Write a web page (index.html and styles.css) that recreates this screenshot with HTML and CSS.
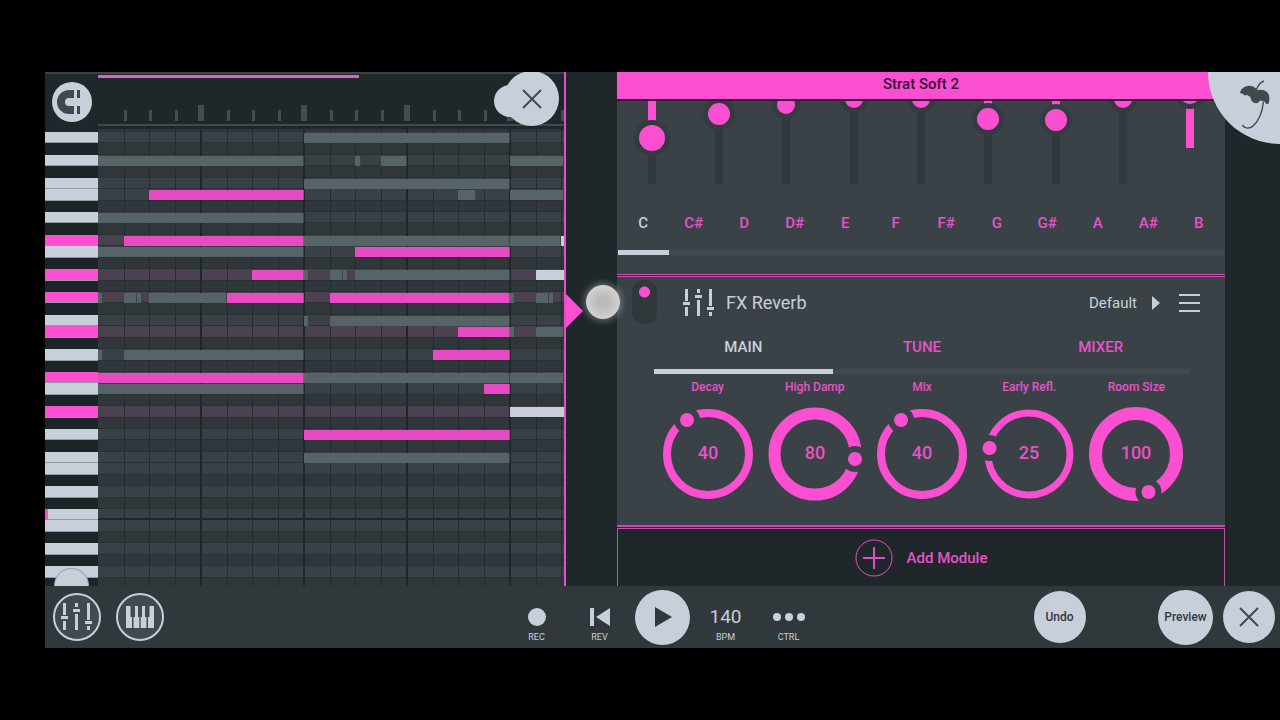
FILE: index.html
```html
<!DOCTYPE html>
<html lang="en">
<head>
  <meta charset="UTF-8" />
  <meta name="viewport" content="width=device-width, initial-scale=1.0" />
  <title>Strat Soft 2</title>
  <link rel="stylesheet" href="styles.css">
</head>
<body>
  <div class="app">
    <main class="workspace">
      <!-- Piano roll -->
      <section class="roll">
        <div class="roll-top">
          <button class="magnet" aria-label="Snap">
            <svg viewBox="0 0 40 40" width="40" height="40">
              <path d="M22 8H17A12 12 0 0 0 17 32H22V24H17A4 4 0 0 1 17 16H22Z" fill="#42484e"/>
              <path d="M25 8h3v8h-3zM25 24h3v8h-3z" fill="#42484e"/>
            </svg>
          </button>
          <div class="ruler">
            <div class="loop"></div>
            <div class="ticks" id="ticks"></div>
          </div>
          <button class="close-roll" aria-label="Close editor">
            <svg viewBox="0 0 20 20" width="20" height="20"><path d="M1 1L19 19M19 1L1 19"/></svg>
          </button>
        </div>
        <div class="roll-body">
          <div class="keys" id="keys"></div>
          <div class="grid" id="grid">
            <div class="lanes" id="lanes"></div>
          </div>
          <div class="handle"></div>
        </div>
      </section>

      <!-- Divider with drag arrow -->
      <div class="divider">
        <div class="arrow"></div>
        <div class="touch"></div>
      </div>

      <!-- Module rack -->
      <section class="rack">
        <h1 class="rack-title">Strat Soft 2</h1>
        <div class="module sampler">
          <div class="faders">
            <input class="fader xl" type="range" min="0" max="160" value="121" aria-label="Fader 1" style="--from: 70px; --to: 114px">
            <input class="fader md" type="range" min="0" max="160" value="92" aria-label="Fader 2">
            <input class="fader sm" type="range" min="0" max="160" value="81" aria-label="Fader 3">
            <input class="fader sm" type="range" min="0" max="160" value="74" aria-label="Fader 4">
            <input class="fader sm" type="range" min="0" max="160" value="74" aria-label="Fader 5">
            <input class="fader md" type="range" min="0" max="160" value="97" aria-label="Fader 6" style="--from: 70px; --to: 94px">
            <input class="fader md" type="range" min="0" max="160" value="99" aria-label="Fader 7" style="--from: 70px; --to: 96px">
            <input class="fader sm" type="range" min="0" max="160" value="74" aria-label="Fader 8">
            <input class="fader md last" type="range" min="0" max="160" value="67" aria-label="Fader 9" style="--from: 69px; --to: 124px">
          </div>
          <nav class="tabs notes">
            <button class="tab active">C</button>
            <button class="tab">C#</button>
            <button class="tab">D</button>
            <button class="tab">D#</button>
            <button class="tab">E</button>
            <button class="tab">F</button>
            <button class="tab">F#</button>
            <button class="tab">G</button>
            <button class="tab">G#</button>
            <button class="tab">A</button>
            <button class="tab">A#</button>
            <button class="tab">B</button>
          </nav>
        </div>

        <div class="module reverb">
          <div class="module-head">
            <input class="power" type="checkbox" checked aria-label="Module on">
            <svg class="fx-icon" viewBox="0 0 32 28" width="32" height="28" fill="#c8cfdb">
              <path d="M2 0h3v12h-3zM0 13h7v3h-7zM2 18h3v9h-3zM14 0h3v4h-3zM12 6h7v3h-7zM14 11h3v16h-3zM26 0h3v17h-3zM24 18h7v3h-7zM26 23h3v4h-3z"/>
            </svg>
            <h2>FX Reverb</h2>
            <button class="preset">Default
              <svg viewBox="0 0 8 14" width="8" height="14"><path d="M0 0L8 7L0 14Z" fill="#c8cfdb"/></svg>
            </button>
            <button class="menu" aria-label="Menu">
              <svg viewBox="0 0 21 18" width="21" height="18"><path d="M0 0h21v2H0zM0 8h21v2H0zM0 16h21v2H0z" fill="#c8cfdb"/></svg>
            </button>
          </div>
          <nav class="tabs pages">
            <button class="tab active">MAIN</button>
            <button class="tab">TUNE</button>
            <button class="tab">MIXER</button>
          </nav>
          <div class="knobs">
            <label class="knob">
              <span>Decay</span>
              <svg viewBox="-50 -50 100 100">
                <circle class="ring" r="41" stroke-width="8"/>
                <circle class="gap" cx="-21" cy="-34" r="13"/><circle class="dot" cx="-21" cy="-34" r="7"/>
                <text y="5">40</text>
              </svg>
              <input type="range" min="0" max="100" value="40">
            </label>
            <label class="knob">
              <span>High Damp</span>
              <svg viewBox="-50 -50 100 100">
                <circle class="ring" r="40.5" stroke-width="12"/>
                <circle class="gap" cx="40" cy="5" r="13"/><circle class="dot" cx="40" cy="5" r="7"/>
                <text y="5">80</text>
              </svg>
              <input type="range" min="0" max="100" value="80">
            </label>
            <label class="knob">
              <span>Mix</span>
              <svg viewBox="-50 -50 100 100">
                <circle class="ring" r="41" stroke-width="8"/>
                <circle class="gap" cx="-21" cy="-34" r="13"/><circle class="dot" cx="-21" cy="-34" r="7"/>
                <text y="5">40</text>
              </svg>
              <input type="range" min="0" max="100" value="40">
            </label>
            <label class="knob">
              <span>Early Refl.</span>
              <svg viewBox="-50 -50 100 100">
                <circle class="ring" r="41" stroke-width="7"/>
                <circle class="gap" cx="-39.5" cy="-6" r="13"/><circle class="dot" cx="-39.5" cy="-6" r="7"/>
                <text y="5">25</text>
              </svg>
              <input type="range" min="0" max="100" value="25">
            </label>
            <label class="knob">
              <span>Room Size</span>
              <svg viewBox="-50 -50 100 100">
                <circle class="ring" r="40.5" stroke-width="13"/>
                <circle class="gap" cx="12.5" cy="38" r="13"/><circle class="dot" cx="12.5" cy="38" r="7"/>
                <text y="5">100</text>
              </svg>
              <input type="range" min="0" max="100" value="100">
            </label>
          </div>
        </div>

        <button class="add-module">
          <svg viewBox="0 0 38 38" width="38" height="38" fill="none" stroke="#e04fc4">
            <circle cx="19" cy="19" r="18"/><path d="M8 19H30M19 8V30" stroke-width="2"/>
          </svg>
          Add Module
        </button>
      </section>

      <button class="palm" aria-label="Main menu">
        <svg viewBox="0 0 216 216">
          <path d="M96 62C98 51 108 43 123 41C134 40 144 47 149 55C157 51 171 53 179 62C187 73 184 86 182 94C180 98 176 98 173 94L169 88C164 91 160 83 156 86C153 88 150 93 145 94C138 94 133 91 130 85L126 73C122 75 119 68 115 68C111 73 109 70 106 67Z" fill="#42484e"/>
          <path d="M168 27C158 30 151 38 146 52M166 90C164 122 150 150 134 163C122 171 110 169 103 159" fill="none" stroke="#42484e" stroke-width="4"/>
        </svg>
      </button>
    </main>

    <!-- Transport bar -->
    <footer class="transport">
      <div class="group">
        <div class="slot">
          <button class="outline" aria-label="Effects">
            <svg viewBox="0 0 32 28" width="32" height="28">
              <path d="M2 0h3v12h-3zM0 13h7v3h-7zM2 18h3v9h-3zM14 0h3v4h-3zM12 6h7v3h-7zM14 11h3v16h-3zM26 0h3v17h-3zM24 18h7v3h-7zM26 23h3v4h-3z"/>
            </svg>
          </button>
        </div>
        <div class="slot">
          <button class="outline" aria-label="Keyboard">
            <svg viewBox="0 0 28 22" width="28" height="22">
              <path d="M0 0h4.5v11h1.5v11h-6zM9 0h3v11h1.3v11h-5.8v-11h1.5zM16 0h3v11h1.5v11h-5.8v-11h1.3zM23.5 0h4.5v22h-6v-11h1.5z"/>
            </svg>
          </button>
        </div>
      </div>
      <div class="group">
        <button class="slot control">
          <svg viewBox="0 0 20 20" width="20" height="20"><circle cx="10" cy="10" r="9"/></svg>
          <span>REC</span>
        </button>
        <button class="slot control">
          <svg viewBox="0 0 20 20" width="20" height="20"><path d="M0 1h4v18h-4zM20 1v18L6 10z"/></svg>
          <span>REV</span>
        </button>
        <div class="slot">
          <button class="round large" aria-label="Play">
            <svg viewBox="0 0 18 20" width="18" height="20"><path d="M1 0L18 10L1 20Z" fill="#31383b"/></svg>
          </button>
        </div>
        <button class="slot control">
          <b>140</b>
          <span>BPM</span>
        </button>
        <button class="slot control">
          <svg viewBox="0 0 32 20" width="32" height="20"><circle cx="4" cy="10" r="4"/><circle cx="16" cy="10" r="4"/><circle cx="28" cy="10" r="4"/></svg>
          <span>CTRL</span>
        </button>
      </div>
      <div class="group end">
        <div class="slot"><button class="round">Undo</button></div>
        <div class="slot"></div>
        <div class="slot"><button class="round large">Preview</button></div>
        <div class="slot">
          <button class="round" aria-label="Close">
            <svg viewBox="0 0 20 20" width="20" height="20"><path class="cross" d="M1 1L19 19M19 1L1 19"/></svg>
          </button>
        </div>
      </div>
    </footer>
  </div>

  <script>
    const ROWS = 40;
    const STEPS = 18.1;
    const whiteRows = [0, 2, 4, 5, 7, 9, 10, 12, 14, 16, 17, 19, 21, 22, 24, 26, 28, 29, 31, 33, 34, 36, 38];
    const scaleRows = [9, 12, 14, 17, 21, 24];

    // row, start, end, type
    const notes = [
      [0, 8, 16, "ghost"],
      [2, 0, 8, "ghost"], [2, 10, 10.2, "ghost"], [2, 11, 12, "ghost"], [2, 16, 18.1, "ghost"],
      [4, 8, 16, "ghost"],
      [5, 2, 8, "note"], [5, 14, 14.7, "ghost"], [5, 16, 18.1, "ghost"],
      [7, 0, 8, "ghost"],
      [9, 1, 8, "note"], [9, 8, 16, "ghost"], [9, 16, 18, "ghost"], [9, 18, 18.1, "playing"],
      [10, 0, 8, "ghost"], [10, 10, 16, "note"],
      [12, 6, 8, "note"], [12, 8, 8.2, "ghost"], [12, 9, 9.5, "ghost"], [12, 9.5, 9.7, "ghost"],
      [12, 10, 16, "ghost"], [12, 17, 18.1, "playing"],
      [14, 0, 0.2, "ghost"], [14, 1, 1.5, "ghost"], [14, 1.5, 1.7, "ghost"], [14, 2, 5, "ghost"],
      [14, 5, 8, "note"], [14, 9, 16, "note"], [14, 16, 16.2, "ghost"], [14, 17, 17.5, "ghost"], [14, 17.5, 17.7, "ghost"],
      [16, 8, 8.2, "ghost"], [16, 9, 16, "ghost"],
      [17, 14, 16, "note"], [17, 16, 16.2, "ghost"], [17, 17, 18.1, "ghost"],
      [19, 0, 0.2, "ghost"], [19, 1, 8, "ghost"], [19, 13, 16, "note"],
      [21, 0, 8, "note"], [21, 8, 16, "ghost"], [21, 16, 18.1, "ghost"],
      [22, 0, 8, "ghost"], [22, 15, 16, "note"],
      [24, 16, 18.1, "playing"],
      [26, 8, 16, "note"],
      [28, 8, 16, "ghost"]
    ];

    function add(parent, className) {
      const div = document.createElement("div");
      div.className = className;
      parent.appendChild(div);
      return div;
    }

    const keys = document.getElementById("keys");
    const lanes = document.getElementById("lanes");
    const ticks = document.getElementById("ticks");

    for (let i = 0; i < ROWS; i++) {
      const white = whiteRows.includes(i) ? " white" : "";
      const scale = scaleRows.includes(i) ? " scale" : "";
      const root = i === 33 ? " root" : "";
      add(keys, "key" + white + scale + root);
      add(lanes, "lane" + white + scale + root);
    }

    for (let i = 1; i <= 18; i++) {
      const tick = add(ticks, i % 4 === 0 ? "tick beat" : "tick");
      tick.style.left = (i / STEPS * 100) + "%";
      const line = add(lanes, i % 4 === 0 ? "line bar" : "line");
      line.style.left = (i / STEPS * 100) + "%";
    }

    notes.forEach(([row, start, end, type]) => {
      const note = add(lanes, type);
      note.style.left = (start / STEPS * 100) + "%";
      note.style.width = ((end - start) / STEPS * 100) + "%";
      note.style.top = (row / ROWS * 100) + "%";
    });
  </script>
</body>
</html>
```
FILE: styles.css
```css
* {
  box-sizing: border-box;
}

body {
  margin: 0;
  height: 100vh;
  padding: 72px 0 72px 45px;
  background: #000;
  color: #c8cfdb;
  font-family: Roboto, sans-serif;
  overflow: hidden;
}

button {
  margin: 0;
  padding: 0;
  border: none;
  background: none;
  color: inherit;
  font: inherit;
  cursor: pointer;
}

h1, h2 {
  margin: 0;
  font-weight: 400;
}

svg {
  display: block;
}

.app {
  height: 100%;
  display: flex;
  flex-direction: column;
  background: #20272a;
}

.workspace {
  position: relative;
  flex: 1;
  min-height: 0;
  display: grid;
  grid-template-columns: 521fr 51px 608fr 55px;
  overflow: hidden;
}

/* Piano roll */
.roll {
  display: flex;
  flex-direction: column;
  min-width: 0;
  min-height: 0;
  border-right: 2px solid #e250c6;
}

.roll-top {
  position: relative;
  flex: none;
  display: grid;
  grid-template-columns: 53px 1fr;
  height: 57px;
  border-top: 2px solid #3c4246;
}

.magnet {
  align-self: center;
  justify-self: center;
  width: 40px;
  height: 40px;
  border-radius: 50%;
  background: #c8cfdb;
}

.ruler {
  display: flex;
  flex-direction: column;
  justify-content: space-between;
  margin-bottom: 3px;
  padding-top: 1px;
  border-bottom: 2px solid #42484c;
}

.loop {
  width: 56%;
  height: 3px;
  background: #d964c2;
}

.ticks {
  position: relative;
  height: 19px;
}

.tick {
  position: absolute;
  bottom: 3px;
  width: 3px;
  height: 11px;
  background: #454c50;
}

.tick.beat {
  width: 6px;
  height: 16px;
  margin-left: -3px;
}

.close-roll {
  position: absolute;
  top: -3px;
  right: 5px;
  width: 55px;
  height: 55px;
  display: grid;
  place-items: center;
  border-radius: 50%;
  background: #c8cfdb;
}

.close-roll::before {
  content: "";
  position: absolute;
  left: -10px;
  top: 14px;
  width: 32px;
  height: 32px;
  border-radius: 50%;
  background: #c8cfdb;
}

.close-roll svg {
  position: relative;
}

.close-roll path, .cross {
  stroke: #42484e;
  stroke-width: 2;
}

.roll-body {
  position: relative;
  flex: 1;
  min-height: 0;
  display: grid;
  grid-template-columns: 53px 1fr;
  padding-top: 3px;
  overflow: hidden;
}

.grid {
  margin-top: -3px;
  border-top: 3px solid #30373a;
}

.keys, .lanes {
  position: relative;
  display: grid;
  grid-template-rows: repeat(40, 1fr);
  height: 457px;
}

.keys {
  background: #1d2427;
}

.key.white {
  background: #c8cfdb;
  border-bottom: 1px solid #929aa3;
}

.key.scale {
  background: #f94fd0;
}

.key.root {
  border-left: 3px solid #f94fd0;
}

.lane {
  background: #30373a;
  border-bottom: 1px solid #2a3135;
}

.lane.white {
  background: #394147;
}

.lane.scale {
  background: #4b4150;
}

.lane.root {
  border-bottom: 2px solid #20272c;
}

.line {
  position: absolute;
  top: -3px;
  bottom: 0;
  width: 1px;
  background: #252c30;
}

.line.bar {
  width: 2px;
  margin-left: -1px;
  background: #20272b;
}

.note, .ghost, .playing {
  position: absolute;
  height: 10px;
  margin-top: 1px;
  background: #e64bc4;
  border-right: 1px solid #b33b9a;
}

.ghost {
  background: #566367;
  border-color: #3b4448;
}

.playing {
  background: #c8cfdb;
  border: none;
}

.handle {
  position: absolute;
  left: 9px;
  bottom: 0;
  width: 35px;
  height: 18px;
  border-radius: 18px 18px 0 0;
  border: 1px solid #9aa1aa;
  border-bottom: none;
  background: #c8cfdb;
}

/* Divider */
.divider {
  position: relative;
  display: flex;
  align-items: center;
}

.arrow {
  width: 17px;
  height: 34px;
  margin-bottom: 36px;
  background: #f94fd0;
  clip-path: polygon(0 0, 100% 50%, 0 100%);
}

.touch {
  position: absolute;
  z-index: 2;
  left: 20px;
  top: 213px;
  width: 34px;
  height: 34px;
  border-radius: 50%;
  background: radial-gradient(circle, #babab8 20%, #d2d2d2 70%);
  box-shadow: 0 0 6px 2px rgba(200, 207, 210, 0.4);
}

/* Rack */
.rack {
  display: flex;
  flex-direction: column;
  min-width: 0;
}

.rack-title {
  height: 29px;
  border-bottom: 2px solid #35123a;
  background: #f94fd0;
  color: #35123a;
  font-size: 15px;
  font-weight: 500;
  line-height: 25px;
  text-align: center;
}

.module {
  background: #3a4247;
}

.sampler {
  padding: 0 1px 19px;
  border-bottom: 1px solid #c45cb0;
}

.faders {
  display: grid;
  grid-template-columns: repeat(9, 1fr);
  grid-template-rows: 100%;
  justify-items: center;
  align-items: end;
  height: 83px;
  overflow: hidden;
}

.fader {
  --size: 18px;
  --from: 0px;
  --to: 0px;
  appearance: none;
  writing-mode: vertical-lr;
  width: 40px;
  height: 160px;
  margin: 0;
  background:
    linear-gradient(transparent var(--from), #f94fd0 var(--from), #f94fd0 var(--to), transparent var(--to)) center / 8px 100% no-repeat,
    linear-gradient(#31383c, #31383c) center / 8px 100% no-repeat;
}

.fader.md {
  --size: 22px;
}

.fader.xl {
  --size: 26px;
}

.fader.last {
  background: linear-gradient(transparent var(--from), #f94fd0 var(--from), #f94fd0 var(--to), transparent var(--to)) center / 8px 100% no-repeat;
}

.fader::-webkit-slider-thumb {
  appearance: none;
  width: var(--size);
  height: var(--size);
  border-radius: 50%;
  background: #f94fd0;
  box-shadow: 0 0 0 5px #343b40;
}

.tabs {
  display: grid;
  grid-auto-flow: column;
  grid-auto-columns: 1fr;
  font-size: 15px;
  font-weight: 500;
  color: #e653c9;
}

.tab {
  border-bottom: 5px solid #42494f;
}

.tab.active {
  color: #c8cfdb;
  border-color: #c8cfdb;
}

.notes {
  margin-top: 28px;
}

.notes .tab {
  height: 43px;
  padding-bottom: 16px;
}

.reverb {
  flex: 1;
  margin-top: 1px;
  border-top: 1px solid #d64bbb;
  border-bottom: 2px solid #d043b5;
}

.module-head {
  display: flex;
  align-items: center;
  height: 51px;
  padding: 0 25px 0 15px;
}

.power {
  appearance: none;
  align-self: flex-start;
  width: 25px;
  height: 44px;
  margin: 3px 26px 0 0;
  border-radius: 12px;
  background: radial-gradient(circle at 50% 12px, #f94fd0 5px, transparent 6px) #31383c;
}

h2 {
  margin-left: 11px;
  font-size: 18px;
}

.preset {
  display: flex;
  align-items: center;
  gap: 15px;
  margin: 0 19px 0 auto;
  font-size: 15px;
}

.pages {
  margin: 0 35px 0 37px;
}

.pages .tab {
  height: 46px;
  padding-bottom: 4px;
}

.knobs {
  display: grid;
  grid-template-columns: repeat(5, 1fr);
  margin: 0 35px 0 37px;
}

.knob {
  position: relative;
  display: flex;
  flex-direction: column;
  align-items: center;
  padding-top: 5px;
  color: #e653c9;
  font-size: 12px;
  font-weight: 500;
  line-height: 16px;
}

.knob svg {
  width: 100px;
  height: 100px;
  margin-top: 9px;
}

.knob input {
  position: absolute;
  bottom: 0;
  width: 100px;
  height: 100px;
  margin: 0;
  opacity: 0;
}

.ring {
  fill: none;
  stroke: #f94fd0;
}

.gap {
  fill: #3a4247;
}

.dot {
  fill: #f94fd0;
}

.knob text {
  fill: #e653c9;
  font-size: 18px;
  text-anchor: middle;
}

.add-module {
  display: flex;
  justify-content: center;
  align-items: center;
  gap: 14px;
  height: 58px;
  margin-top: 1px;
  border: 1px solid #b85aa6;
  border-bottom: none;
  color: #e653c9;
  font-size: 15px;
  font-weight: 500;
}

.palm {
  position: absolute;
  top: 0;
  right: 0;
  width: 72px;
  height: 72px;
  border-radius: 0 0 0 72px;
  background: #c8cfdb;
}

/* Transport */
.transport {
  display: grid;
  grid-template-columns: 1fr auto 1fr;
  height: 62px;
  background: #31383b;
}

.group {
  display: flex;
}

.group.end {
  justify-content: flex-end;
}

.slot {
  width: 63px;
  display: flex;
  justify-content: center;
  align-items: center;
}

.control {
  flex-direction: column;
  gap: 5px;
  padding-top: 14px;
  font-size: 9px;
  line-height: 10px;
}

.control b {
  font-size: 19px;
  font-weight: 400;
  line-height: 20px;
}

.control svg, .outline svg {
  fill: #c8cfdb;
}

.outline {
  width: 48px;
  height: 48px;
  display: grid;
  place-items: center;
  border: 2px solid #c8cfdb;
  border-radius: 50%;
  background: #42494f;
}

.round {
  width: 52px;
  height: 52px;
  display: grid;
  place-items: center;
  border-radius: 50%;
  background: #c8cfdb;
  color: #31383b;
  font-size: 12px;
  font-weight: 500;
}

.round.large {
  width: 55px;
  height: 55px;
}
```
